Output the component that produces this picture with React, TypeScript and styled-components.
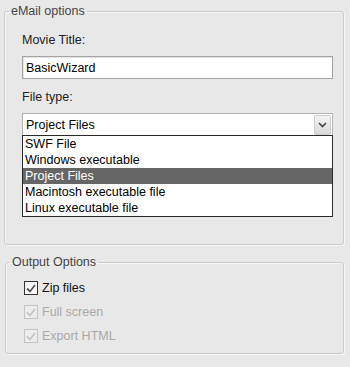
import React from "react";
import styled, { createGlobalStyle } from "styled-components";

const Global = createGlobalStyle`
  html, body { margin: 0; padding: 0; background: #e8e8e8; }
  body { font-family: "Liberation Sans", Arial, sans-serif; font-size: 12.5px; color: #111; }
  * { box-sizing: border-box; }
`;

const Page = styled.div`
  width: 350px;
  height: 367px;
  padding-top: 3px;
  display: flex;
  flex-direction: column;
`;

const Group = styled.fieldset<{ $ml: number; $pt: number; $pb: number; $mt: number }>`
  margin: ${(p) => p.$mt}px 6px 0 ${(p) => p.$ml}px;
  padding: ${(p) => p.$pt}px 10px ${(p) => p.$pb}px 17px;
  border: 1px solid #cbcbcb;
  border-radius: 3px;
  box-shadow: 1px 1px 0 #f6f6f6, inset 1px 1px 0 #f6f6f6;
  min-width: 0;
`;

const Legend = styled.legend`
  margin-left: -13px;
  padding: 0 2px;
  line-height: 16px;
  color: #444;
`;

const Label = styled.div`
  line-height: 16px;
  color: #222;
`;

const TextInput = styled.input`
  display: block;
  width: 100%;
  height: 23px;
  margin: 8px 0 10px;
  padding: 0 3px;
  border: 1px solid #a4a4a4;
  box-shadow: inset 1px 1px 0 #e4e4e4;
  background: #fff;
  font: inherit;
  color: #000;
  outline: none;
`;

const SelectBox = styled.div`
  margin-top: 8px;
  height: 22px;
  border: 1px solid #b4b4b4;
  border-bottom: none;
  background: #fff;
  display: flex;
  align-items: center;
  justify-content: space-between;
  padding: 1px 1px 0 3px;
  color: #000;
`;

const DropButton = styled.div`
  width: 17px;
  height: 20px;
  border: 1px solid #cdcdcd;
  border-radius: 2px;
  background: linear-gradient(#f4f4f4, #d9d9d9);
  display: flex;
  align-items: center;
  justify-content: center;
`;

const List = styled.ul`
  list-style: none;
  margin: 0;
  padding: 0;
  border: 1px solid #2a2a2a;
  background: #fff;
`;

const Item = styled.li<{ $selected?: boolean }>`
  height: 16px;
  line-height: 16px;
  padding-left: 2px;
  color: ${(p) => (p.$selected ? "#fff" : "#000")};
  background: ${(p) => (p.$selected ? "#666666" : "transparent")};
`;

const CheckRow = styled.div<{ $disabled?: boolean }>`
  height: 24px;
  display: flex;
  align-items: center;
  gap: 4px;
  margin-left: 1px;
  color: ${(p) => (p.$disabled ? "#a8a8a8" : "#111")};
`;

const Box = styled.span<{ $disabled?: boolean }>`
  width: 14px;
  height: 14px;
  border: 1px solid ${(p) => (p.$disabled ? "#c4c4c4" : "#333")};
  background: ${(p) => (p.$disabled ? "#ececec" : "linear-gradient(#f2f2f2, #fff)")};
  display: flex;
  align-items: center;
  justify-content: center;
`;

const Check = ({ color }: { color: string }) => (
  <svg width="10" height="9" viewBox="0 0 10 9">
    <path d="M1 4.5 L4 7.5 L9 1" fill="none" stroke={color} strokeWidth="1.8" />
  </svg>
);

const Checkbox = ({ label, disabled }: { label: string; disabled?: boolean }) => (
  <CheckRow $disabled={disabled}>
    <Box $disabled={disabled}>
      <Check color={disabled ? "#c4c4c4" : "#555"} />
    </Box>
    <span>{label}</span>
  </CheckRow>
);

const items = ["SWF File", "Windows executable", "Project Files", "Macintosh executable file", "Linux executable file"];

export default function App() {
  return (
    <Page>
      <Global />
      <Group $ml={4} $pt={13} $pb={27} $mt={0}>
        <Legend>eMail options</Legend>
        <Label>Movie Title:</Label>
        <TextInput defaultValue="BasicWizard" />
        <Label>File type:</Label>
        <SelectBox>
          <span>Project Files</span>
          <DropButton>
            <svg width="9" height="6" viewBox="0 0 9 6">
              <path d="M1 1 L4.5 4.5 L8 1" fill="none" stroke="#444" strokeWidth="1.6" />
            </svg>
          </DropButton>
        </SelectBox>
        <List>
          {items.map((t) => (
            <Item key={t} $selected={t === "Project Files"}>
              {t}
            </Item>
          ))}
        </List>
      </Group>
      <Group $ml={5} $pt={6} $pb={5} $mt={9}>
        <Legend>Output Options</Legend>
        <Checkbox label="Zip files" />
        <Checkbox label="Full screen" disabled />
        <Checkbox label="Export HTML" disabled />
      </Group>
    </Page>
  );
}
